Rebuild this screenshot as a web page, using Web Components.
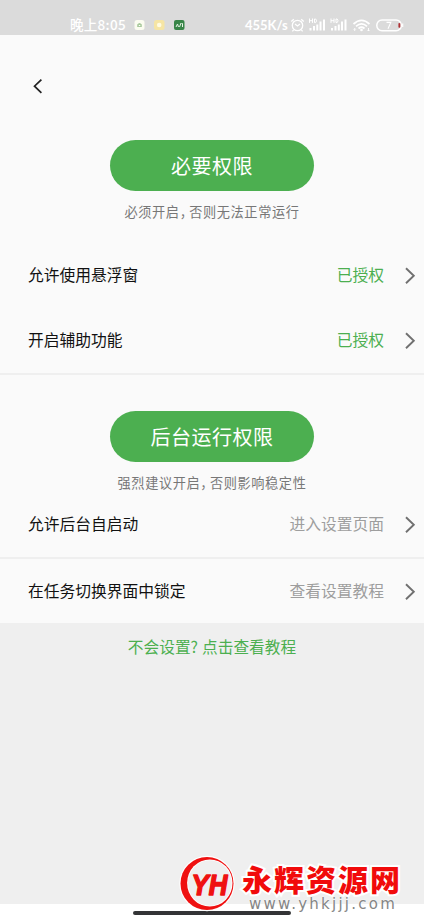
<!DOCTYPE html>
<html lang="zh-CN">
<head>
<meta charset="utf-8">
<title>权限设置</title>
<style>
html,body{margin:0;height:100%;overflow:hidden;background:#fff}
body{font-family:"Noto Sans CJK SC",sans-serif}
</style>
</head>
<body>
<permission-app></permission-app>
<script>
const define = (name, html, setup) => customElements.define(name, class extends HTMLElement {
  connectedCallback() {
    if (this.shadowRoot) return;
    this.attachShadow({mode: 'open'}).innerHTML = html;
    if (setup) setup(this, this.shadowRoot);
  }
});

define('status-bar', `
<style>
:host{display:flex;box-sizing:border-box;height:35px;background:#dbdbdb;color:#fff;padding:14px 19px 0 70px;align-items:center;justify-content:space-between;font-size:13.5px;line-height:20px;font-weight:500}
.l,.r{display:flex;align-items:center;height:20px}
.l{padding-bottom:2px}
.time{width:57px;white-space:nowrap;letter-spacing:.3px}
.l svg{margin:2px 0 0 7px}
.speed{font:700 13px/20px Lato,sans-serif;letter-spacing:0;width:43px;white-space:nowrap}
svg{display:block;flex:none}
</style>
<div class="l"><span class="time">晚上8:05</span>
<svg width="51" height="12" viewBox="0 0 51 12">
<rect x=".5" y="1" width="10" height="10" rx="2.5" fill="#fbfcf0"/><path d="M3.2 8V5.5Q5.5 2.5 7.8 5.5V8Z" fill="#a9c99c"/><path d="M4.8 6.5h1.5" stroke="#fff"/>
<rect x="20" y="1" width="10.5" height="10" rx="2.5" fill="#f6e5a4"/><circle cx="25.2" cy="6" r="2.3" fill="#fffbe2"/>
<rect x="40" y="1" width="10.5" height="10" rx="2" fill="#388548"/><path d="M42 8l1.5-3 1 3M45.5 8L47 4M47.5 4.5h1V8" stroke="#e4f3e4" fill="none"/>
</svg></div>
<div class="r"><span class="speed">455K/s</span>
<svg width="117" height="18" viewBox="0 0 117 18" fill="none" stroke="#fff" stroke-width="1.3">
<circle cx="9.5" cy="9.5" r="5.2"/><path d="M7 8l2.5 2L12 8M3.3 5.5l2.5-2.3M13.2 3.2l2.5 2.3M5.6 13.8l-1.2 1.5M13.4 13.8l1.2 1.5"/>
<g id="s"><path d="M21.5 2.5v4.4M24.5 2.5v4.4M21.5 4.7h3M26.5 3h1.2q1.8 1.8 0 3.6h-1.2z" stroke-width="1"/><path d="M22.5 12v2.5M26 10v4.5M29.3 8.5v6M32.5 5.5v9M36 3.5v11" stroke-width="2"/></g>
<use href="#s" x="21.5"/>
<path d="M65.5 8Q73.5 .8 81.5 8M68 10.3q5.5-5 11 0M70.5 12.5q3-2.5 6 0" stroke-width="1.7"/><circle cx="73.5" cy="14" r="1.3" fill="#fff" stroke="none"/><path d="M66.7 12.5V15M65.7 13.5l1-1 1 1M80.5 12v3M79.5 14l1 1 1-1" stroke-width=".9"/>
<rect x="88.8" y="4" width="24.5" height="10.8" rx="5.2" stroke-width="1.5"/><path d="M114.7 7.5v3.6" stroke-width="1.2"/><path d="M98.5 6.4h4.3l-2.8 6.4" stroke-width="1.1"/><path d="M110.8 7.5h1.2v3.8h-1.2z" fill="#a12d31" stroke="#b6383a" stroke-width=".7"/>
</svg></div>`);

define('app-bar', `
<style>:host{display:flex;height:105px;box-sizing:border-box;padding:42px 0 0 31px}svg{width:14px;height:18px}</style>
<svg viewBox="0 0 14 18"><path d="M10.4 2.6L3.5 9.2l6.9 6.7" fill="none" stroke="#222" stroke-width="1.7"/></svg>`);

define('section-head', `
<style>
:host{display:flex;flex-direction:column;align-items:center}
.pill{width:204px;height:51px;border-radius:26px;background:#4caf50;color:#fff;font-size:20px;letter-spacing:.5px;line-height:52px;text-align:center}
.note{color:#777;font-size:13.2px;letter-spacing:.6px;line-height:20px;margin-top:11px;white-space:nowrap}
</style>
<div class="pill"><slot name="title"></slot></div><div class="note"><slot></slot></div>`);

define('setting-row', `
<style>
:host{display:flex;box-sizing:border-box;height:65px;align-items:center;padding:0 7px 0 28px;font-size:15.75px;line-height:24px;color:#111;white-space:nowrap}
span{padding-bottom:1px}
.label{flex:1}
.value{color:#9e9e9e}
:host([granted]) .value{color:#4caf50}
svg{width:14px;height:20px;margin-left:19px}
</style>
<span class="label"><slot></slot></span><span class="value"></span>
<svg viewBox="0 0 14 20"><path d="M3 2.3l7.8 7.5L3 17.3" fill="none" stroke="#707070" stroke-width="1.9"/></svg>`,
(el, root) => { root.querySelector('.value').textContent = el.getAttribute('value'); });

define('help-link', `
<style>:host{display:block;text-align:center;padding:12px 0 0;color:#4caf50;font-size:15.7px;line-height:24px;white-space:nowrap}</style><slot></slot>`);

define('home-indicator', `
<style>:host{display:block;height:15px;background:#fff;box-sizing:border-box;padding:7px 0 0 133px}i{display:block;width:158px;height:4px;border-radius:2px;background:#333436}</style><i></i>`);

define('site-watermark', `
<style>
:host{position:absolute;left:179px;top:856px;display:flex;width:230px;height:60px}
svg{width:56px;height:56px;flex:none;overflow:visible}
.t{padding-left:7px;white-space:nowrap}
.name{font-weight:900;font-size:30px;line-height:38px;height:38px;padding-top:3px;box-sizing:border-box;color:#f10b0b;-webkit-text-stroke:4px #fff;paint-order:stroke fill;letter-spacing:2px}
.url{font:15px/18px "DejaVu Sans",sans-serif;letter-spacing:2.25px;color:#858585;padding:1px 0 0 7px;text-shadow:0 0 1px #fff,0 0 2px #fff}
</style>
<svg viewBox="0 0 56 56">
<circle cx="28" cy="27.5" r="27.7" fill="#fff"/>
<circle cx="28" cy="27.5" r="26.5" fill="#ef1111"/>
<ellipse cx="30.8" cy="27" rx="22.7" ry="23.6" fill="#fff"/><ellipse cx="30.8" cy="27" rx="21.8" ry="22.8" fill="#efefef"/>
<text transform="translate(12.5 38.7) scale(.86 1)" font-family="'Liberation Sans',sans-serif" font-size="30" font-weight="700" font-style="italic" fill="#ef1111" stroke="#ef1111" stroke-width="1.6" stroke-linejoin="round">YH</text>
</svg>
<div class="t"><div class="name">永辉资源网</div><div class="url">www.yhkjjj.com</div></div>`);

define('permission-app', `
<style>
:host{position:relative;display:flex;flex-direction:column;width:424px;height:919px;overflow:hidden;background:#efefef}
.sheet{background:#fafafa;height:588px;flex:none;display:flex;flex-direction:column}
.rule{height:2px;background:#efefef}
.gap{height:36px}
help-link{flex:1}
setting-row,section-head,app-bar,.rule,.gap,status-bar{flex:none}
b{font-weight:inherit;font-feature-settings:"halt"}
section-head b{letter-spacing:3px}
help-link b{letter-spacing:4px}
</style>
<status-bar></status-bar>
<div class="sheet">
<app-bar></app-bar>
<section-head style="height:103px"><span slot="title">必要权限</span>必须开启<b>，</b>否则无法正常运行</section-head>
<setting-row granted value="已授权">允许使用悬浮窗</setting-row>
<setting-row granted value="已授权">开启辅助功能</setting-row>
<div class="rule"></div>
<div class="gap"></div>
<section-head style="height:81px"><span slot="title">后台运行权限</span>强烈建议开启<b>，</b>否则影响稳定性</section-head>
<setting-row value="进入设置页面">允许后台自启动</setting-row>
<div class="rule"></div>
<setting-row value="查看设置教程">在任务切换界面中锁定</setting-row>
</div>
<help-link>不会设置<b>?</b>点击查看教程</help-link>
<home-indicator></home-indicator>
<site-watermark></site-watermark>`);
</script>
</body>
</html>
